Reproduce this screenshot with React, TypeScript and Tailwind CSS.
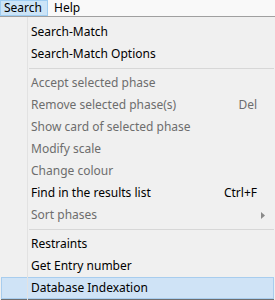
import { ReactNode } from 'react';

type Item = { label: string; shortcut?: string; disabled?: boolean; submenu?: boolean; active?: boolean };

const groups: Item[][] = [
  [{ label: 'Search-Match' }, { label: 'Search-Match Options' }],
  [
    { label: 'Accept selected phase', disabled: true },
    { label: 'Remove selected phase(s)', shortcut: 'Del', disabled: true },
    { label: 'Show card of selected phase', disabled: true },
    { label: 'Modify scale', disabled: true },
    { label: 'Change colour', disabled: true },
    { label: 'Find in the results list', shortcut: 'Ctrl+F' },
    { label: 'Sort phases', disabled: true, submenu: true },
  ],
  [{ label: 'Restraints' }, { label: 'Get Entry number' }, { label: 'Database Indexation', active: true }],
];

function Row({ item }: { item: Item }) {
  return (
    <div
      className={`flex h-[22px] items-center border ${
        item.active ? 'border-[#a8cdee] bg-[#cfe3f6]' : 'border-transparent'
      } ${item.disabled ? 'text-[#6d6d6d]' : 'text-black'}`}
    >
      <div className="w-[29px] shrink-0" />
      <span className="flex-1 whitespace-nowrap">{item.label}</span>
      {item.shortcut && <span className="mr-[16px] whitespace-nowrap">{item.shortcut}</span>}
      {item.submenu && (
        <svg width="4" height="7" viewBox="0 0 4 7" className="mr-[8px]">
          <path d="M0 0 L4 3.5 L0 7 Z" fill="#8a8a8a" />
        </svg>
      )}
    </div>
  );
}

function Separator(): ReactNode {
  return (
    <div className="flex h-[7px] items-center pl-[28px]">
      <div className="h-px flex-1 bg-[#d7d7d7]" />
    </div>
  );
}

export default function App() {
  return (
    <div className="w-[275px] h-[300px] overflow-hidden bg-[#f0f0f0] text-[12px] font-['Noto_Sans','Open_Sans',sans-serif]">
      {/* Menu bar */}
      <div className="flex h-[16px] items-center bg-[#f9f9f9] leading-none">
        <div className="flex h-[16px] items-center border border-[#9fcdf2] bg-[#cce4f7] px-[3px] pr-[5px]">Search</div>
        <div className="px-[6px]">Help</div>
      </div>
      <div className="h-px bg-[#a0a0a0]" />

      {/* Dropdown */}
      <div className="relative pt-[4px] pl-[1px] pr-[1px]">
        <div className="absolute left-[27px] top-0 bottom-0 w-px bg-[#e2e2e2]" />
        {groups.map((g, i) => (
          <div key={i}>
            {i > 0 && <Separator />}
            {g.map((item) => (
              <Row key={item.label} item={item} />
            ))}
          </div>
        ))}
        <div className="h-px bg-[#6e6e6e]" />
      </div>
    </div>
  );
}
